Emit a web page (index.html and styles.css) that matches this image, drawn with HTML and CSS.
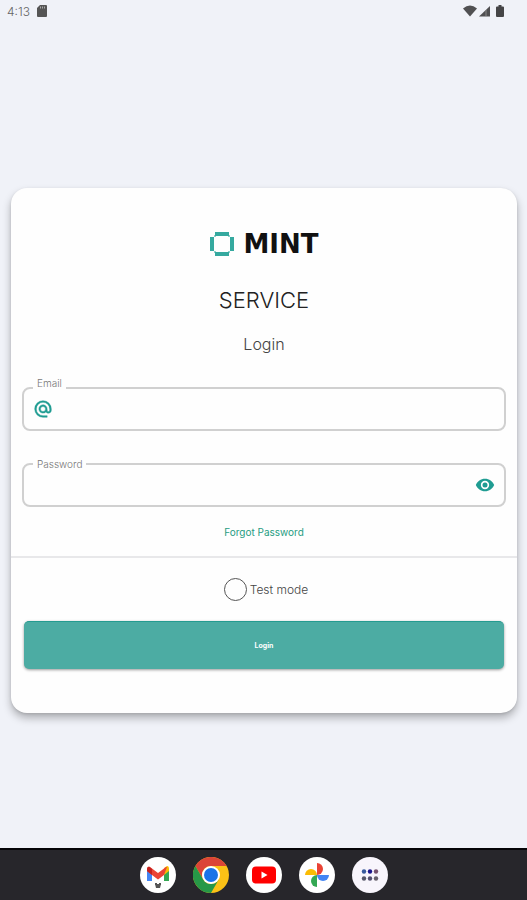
FILE: index.html
```html
<!DOCTYPE html>
<html lang="en">
<head>
<meta charset="utf-8">
<meta name="viewport" content="width=device-width, initial-scale=1">
<title>Mint Service</title>
<link rel="stylesheet" href="styles.css">
</head>
<body>
<header class="status">
  <span class="time">4:13</span>
  <svg width="10" height="12" viewBox="0 0 10 12" aria-hidden="true"><path d="M3 0h6a1 1 0 0 1 1 1v10a1 1 0 0 1-1 1H1a1 1 0 0 1-1-1V3z" fill="#555"/><path d="M3.5 1.5v2M5.5 1.5v2M7.5 1.5v2" stroke="#aaa" stroke-width="1"/></svg>
  <div class="signals">
    <svg width="14" height="12" viewBox="0 0 14 12" aria-hidden="true"><path d="M0 3.5Q7-2.500 14 3.500L7 11.500z" fill="#505052"/></svg>
    <svg width="11" height="12" viewBox="0 0 11 12" aria-hidden="true"><path d="M11 1v10.500H0z" fill="#505052"/><path d="M7 5v6" stroke="#888" stroke-width="1"/></svg>
    <svg class="battery" width="8" height="12" viewBox="0 0 8 12" aria-hidden="true"><path d="M2.500 0h3v1.500H7a1 1 0 0 1 1 1V11a1 1 0 0 1-1 1H1a1 1 0 0 1-1-1V2.500a1 1 0 0 1 1-1h1.500z" fill="#454547"/></svg>
  </div>
</header>

<main>
  <form class="card">
    <div class="brand">
      <svg width="26" height="26" viewBox="0 0 26 26" aria-hidden="true"><g fill="#35a99f"><path d="M6 1h14v4H6zM6 21h14v4H6zM1 6h4v14H1zM21 6h4v14h-4z"/><path d="M5 4h2v2H5zM19 4h2v2h-2zM5 20h2v2H5zM19 20h2v2h-2z" opacity=".55"/></g></svg>
      <span class="wordmark">MINT</span>
    </div>
    <h1>SERVICE</h1>
    <h2>Login</h2>

    <fieldset class="field">
      <legend class="raised"><label for="email">Email</label></legend>
      <div class="control">
        <svg width="20" height="20" viewBox="0 0 24 24" aria-hidden="true"><path d="M12 2a10 10 0 0 0 0 20h5v-2h-5a8 8 0 1 1 8-8v1.400c0 .8-.7 1.600-1.500 1.600s-1.500-.8-1.500-1.600V12a5 5 0 1 0-1.500 3.500c.7 1 1.900 1.500 3 1.500 2 0 3.500-1.600 3.500-3.600V12A10 10 0 0 0 12 2zm0 13a3 3 0 1 1 0-6 3 3 0 0 1 0 6z" fill="#1f9c92" stroke="#1f9c92" stroke-width=".5"/></svg>
        <input id="email" type="email">
      </div>
    </fieldset>

    <fieldset class="field">
      <legend><label for="password">Password</label></legend>
      <div class="control">
        <input id="password" type="password">
        <button class="reveal" type="button" aria-label="Show password">
          <svg width="20" height="20" viewBox="0 0 24 24" aria-hidden="true"><path fill-rule="evenodd" d="M12 4.500C7 4.500 2.700 7.600 1 12c1.700 4.400 6 7.500 11 7.500s9.300-3.100 11-7.500c-1.700-4.400-6-7.500-11-7.500zM12 17a5 5 0 1 1 0-10 5 5 0 0 1 0 10zm0-8a3 3 0 1 0 0 6 3 3 0 0 0 0-6z" fill="#1f9c92"/></svg>
        </button>
      </div>
    </fieldset>

    <a class="forgot" href="#">Forgot Password</a>
    <hr>
    <label class="mode"><input type="checkbox">Test mode</label>
    <button class="submit" type="submit">Login</button>
  </form>
</main>

<nav class="dock" aria-label="Apps">
  <a href="#" aria-label="Gmail"><svg viewBox="0 0 36 36"><circle cx="18" cy="18" r="18" fill="#fff"/><path d="M7 12v12h5V15z" fill="#4285f4"/><path d="M24 15v9h5V12z" fill="#34a853"/><path d="M24 11l3-2q2 0 2 3v2l-5 4z" fill="#fbbc04"/><path d="M7 14v-2q0-3 3-2l8 6 8-6 1 0-3 8-6 4.500-6-4.500z" fill="#ea4335"/><path d="M7 14v-2q0-2 2-2.500l3 2.500v6z" fill="#c5221f"/><path d="M15 27h6l-1 4h-4zM15 26h2v1h2v-1h2v2h-6z" fill="#555"/></svg></a>
  <a href="#" aria-label="Chrome"><svg viewBox="0 0 36 36"><circle cx="18" cy="18" r="18" fill="#fbc116"/><path d="M2.400 9A18 18 0 0 1 33.600 9H18a9 9 0 0 0-7.800 13.500z" fill="#db4437"/><path d="M2.400 9A18 18 0 0 0 18 36l7.800-13.500a9 9 0 0 1-15.600 0z" fill="#279847"/><circle cx="18" cy="18" r="9" fill="#fff"/><circle cx="18" cy="18" r="7" fill="#1a73e8"/></svg></a>
  <a href="#" aria-label="YouTube"><svg viewBox="0 0 36 36"><circle cx="18" cy="18" r="18" fill="#fff"/><rect x="6" y="9.500" width="24" height="17" rx="4" fill="#f00"/><path d="M15.500 14.500v7l6-3.500z" fill="#fff"/></svg></a>
  <a href="#" aria-label="Photos"><svg viewBox="0 0 36 36"><circle cx="18" cy="18" r="18" fill="#fff"/><path d="M18 18V6a6 6 0 0 1 0 12z" fill="#ea4335"/><path d="M18 18h12a6 6 0 0 1-12 0z" fill="#4285f4"/><path d="M18 18v12a6 6 0 0 1 0-12z" fill="#34a853"/><path d="M18 18H6a6 6 0 0 1 12 0z" fill="#fbbc04"/></svg></a>
  <a href="#" aria-label="All apps"><svg viewBox="0 0 36 36"><circle cx="18" cy="18" r="18" fill="#f8f5fc"/><circle cx="12" cy="14.500" r="2.200" fill="#37599c"/><circle cx="18" cy="14.500" r="2.200" fill="#1b168c"/><circle cx="24" cy="14.500" r="2.200" fill="#77536f"/><circle cx="12" cy="21.500" r="2.200" fill="#555668"/><circle cx="18" cy="21.500" r="2.200" fill="#55516f"/><circle cx="24" cy="21.500" r="2.200" fill="#67616b"/></svg></a>
</nav>
</body>
</html>
```
FILE: styles.css
```css
* {
  box-sizing: border-box;
}

body {
  margin: 0;
  min-height: 100vh;
  display: flex;
  flex-direction: column;
  background: #f0f2f8;
  color: #222;
  font-family: Inter, "Liberation Sans", sans-serif;
  font-weight: 300;
}

svg {
  display: block;
}

.status {
  display: flex;
  align-items: center;
  gap: 7px;
  height: 22px;
  padding: 0 23px 0 7px;
  font-size: 12px;
  color: #666;
}

.signals {
  display: flex;
  gap: 2px;
  margin-left: auto;
}

.battery {
  margin-left: 4px;
}

main {
  flex: 1;
  padding: 166px 10px 24px 11px;
}

.card {
  display: flex;
  flex-direction: column;
  padding: 40px 11px 44px;
  border-radius: 16px;
  background: #fefefe;
  box-shadow: 0 5px 9px rgba(0, 0, 0, .28), 0 1px 3px rgba(0, 0, 0, .1);
}

.brand {
  display: flex;
  align-items: center;
  justify-content: center;
  gap: 8px;
  height: 32px;
}

.wordmark {
  font-family: "DejaVu Sans", sans-serif;
  font-size: 26px;
  font-weight: 700;
  line-height: 32px;
  color: #111;
}

h1,
h2 {
  margin: 0;
  font-weight: 300;
  text-align: center;
}

h1 {
  margin-top: 24px;
  font-size: 22px;
  line-height: 32px;
}

h2 {
  margin-top: 16px;
  font-size: 16px;
  line-height: 24px;
  color: #444;
}

.field {
  min-width: 0;
  margin: 21px 0 0;
  padding: 0;
  border: 2px solid #d0d0d0;
  border-radius: 8px;
}

.field + .field {
  margin-top: 27px;
}

.field legend {
  height: 12px;
  margin-left: 9px;
  padding: 0 4px;
  font-size: 10px;
  line-height: 12px;
  color: #777;
}

.field .raised {
  height: 22px;
}

.control {
  display: flex;
  align-items: center;
  height: 40px;
  padding: 0 9px;
  margin-top: -5px;
}

.raised + .control {
  margin-top: -10px;
}

.control input {
  flex: 1;
  min-width: 0;
  height: 32px;
  border: 0;
  outline: 0;
  background: transparent;
  font: inherit;
}

.reveal {
  padding: 0;
  border: 0;
  background: none;
}

.forgot {
  align-self: center;
  margin-top: 15px;
  font-size: 10px;
  line-height: 20px;
  font-weight: 400;
  color: #1f9c82;
  text-decoration: none;
}

hr {
  width: calc(100% + 22px);
  margin: 14px -11px 20px;
  border: 0;
  border-top: 2px solid #e8e8ea;
}

.mode {
  display: flex;
  align-items: center;
  align-self: center;
  gap: 3px;
  padding-left: 4px;
  font-size: 12px;
  color: #444;
}

.mode input {
  appearance: none;
  width: 23px;
  height: 23px;
  margin: 0;
  border: 1px solid #555;
  border-radius: 50%;
}

.submit {
  height: 48px;
  margin: 20px 2px 0;
  border: 0;
  border-top: 1px solid #259b90;
  border-radius: 5px;
  background: #4caca3;
  color: #fff;
  font-family: inherit;
  font-size: 7px;
  font-weight: 700;
  box-shadow: 0 1px 3px rgba(0, 0, 0, .4);
}

.dock {
  display: flex;
  align-items: center;
  justify-content: center;
  gap: 17px;
  height: 52px;
  border-top: 2px solid #050507;
  background: #27262b;
}

.dock svg {
  width: 36px;
  height: 36px;
}
```
